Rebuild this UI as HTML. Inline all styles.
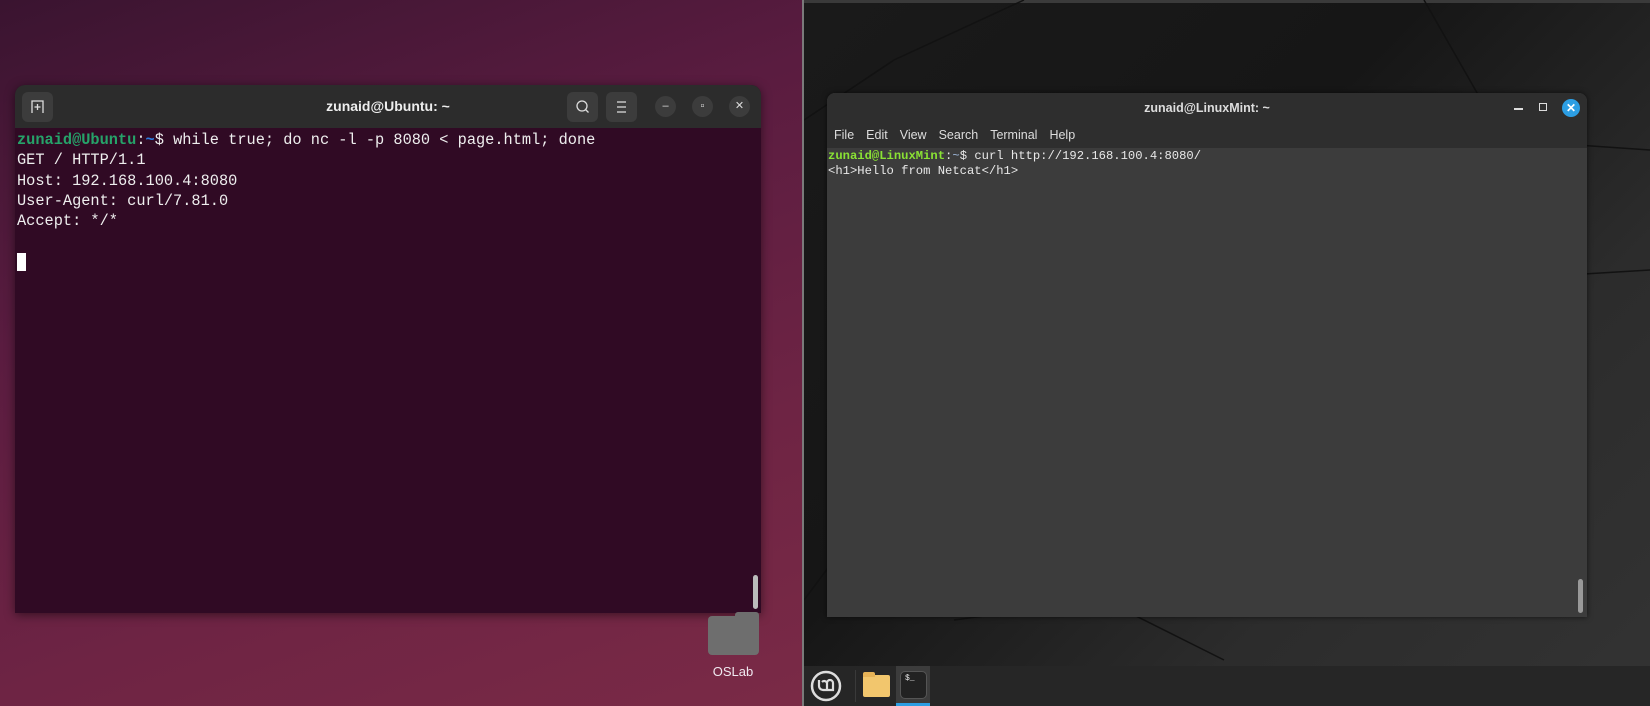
<!DOCTYPE html>
<html><head><meta charset="utf-8"><style>
*{margin:0;padding:0;box-sizing:border-box}
body{width:1650px;height:706px;overflow:hidden;position:relative;font-family:"Liberation Sans",sans-serif;background:#000}
.left{position:absolute;left:0;top:0;width:803px;height:706px;background:linear-gradient(160deg,#3a1430 0%,#5a1c40 35%,#6e2444 70%,#7a2a46 100%)}
.right{position:absolute;left:804px;top:0;width:846px;height:706px;background:linear-gradient(135deg,#1a1a1a 0%,#161616 40%,#2c2c2c 70%,#333 100%)}
.right:before{content:"";position:absolute;left:0;top:0;width:846px;height:3px;background:#3a3a3a}
.div{position:absolute;left:802px;top:0;width:2px;height:706px;background:#7a7a7a}
.uw{position:absolute;left:15px;top:85px;width:746px;height:528px;background:#300a24;border-radius:10px 10px 0 0;overflow:hidden;box-shadow:0 2px 10px rgba(0,0,0,.5)}
.ut{height:43px;background:#2c2c2c;position:relative;color:#eee;font-weight:bold;font-size:14px;text-align:center;line-height:43px}
.btn{position:absolute;top:7px;width:31px;height:30px;background:#3c3c3c;border-radius:6px}
.cir{position:absolute;top:11px;width:21px;height:21px;border-radius:50%;background:#3c3c3c;color:#ddd;font-size:11px;line-height:21px;text-align:center;font-weight:normal}
.mono{font-family:"Liberation Mono","DejaVu Sans Mono",monospace}
.ub{padding:2px 0 0 2px;font-size:15.3px;line-height:20.3px;color:#eee;white-space:pre}
.mw{position:absolute;left:827px;top:93px;width:760px;height:524px;background:#3c3c3c;border-radius:8px 8px 0 0;overflow:hidden;box-shadow:0 0 6px rgba(0,0,0,.6)}
.mt{height:30px;background:#2e2e2e;color:#ddd;font-size:12.5px;font-weight:bold;text-align:center;line-height:30px;position:relative}
.mm{height:25px;background:#2e2e2e;color:#ddd;font-size:12.5px;line-height:24px;padding-left:7px;word-spacing:0}
.mm span{margin-right:12px}
.mb{padding:1px 0 0 1px;font-size:12.2px;line-height:15px;color:#e8e8e8;white-space:pre}
.task{position:absolute;left:804px;top:666px;width:846px;height:40px;background:#262626}
</style></head><body>
<div class="left"></div>
<div class="right">
<svg width="846" height="706" style="position:absolute;left:0;top:0" stroke="#121212" stroke-width="1.5" fill="none"><path d="M0 120 L90 60 L220 0"/><path d="M180 420 L60 520 L0 600"/><path d="M150 620 L300 600 L420 660"/><path d="M620 0 L700 140 L846 150"/><path d="M680 280 L846 270"/></svg>
</div>
<div class="div"></div>

<div class="uw">
 <div class="ut">zunaid@Ubuntu: ~
  <div class="btn" style="left:7px"><svg width="31" height="30"><path d="M10 21V9h11v12M15.5 12v6M12.5 15h6" stroke="#ddd" stroke-width="1.3" fill="none"/></svg></div>
  <div class="btn" style="left:552px"><svg width="31" height="30"><circle cx="15" cy="14" r="5" stroke="#ddd" stroke-width="1.3" fill="none"/><path d="M18.5 17.5l3 3" stroke="#ddd" stroke-width="1.3"/></svg></div>
  <div class="btn" style="left:591px"><svg width="31" height="30"><path d="M11 10h9M11 15h9M11 20h9" stroke="#ddd" stroke-width="1.3"/></svg></div>
  <div class="cir" style="left:640px">–</div>
  <div class="cir" style="left:677px">▫</div>
  <div class="cir" style="left:714px">✕</div>
 </div>
 <div class="ub mono"><span style="color:#26a269;font-weight:bold">zunaid@Ubuntu</span>:<span style="color:#2a7bde;font-weight:bold">~</span>$ while true; do nc -l -p 8080 &lt; page.html; done
GET / HTTP/1.1
Host: 192.168.100.4:8080
User-Agent: curl/7.81.0
Accept: */*

<span style="background:#fff">&nbsp;</span></div>
 <div style="position:absolute;left:738px;top:490px;width:5px;height:34px;background:#bbb;border-radius:3px"></div>
</div>

<div style="position:absolute;left:708px;top:616px;width:51px;height:39px;background:#6e6e6e;border-radius:4px"></div>
<div style="position:absolute;left:735px;top:612px;width:24px;height:8px;background:#6e6e6e;border-radius:3px 3px 0 0"></div>
<div style="position:absolute;left:690px;top:664px;width:86px;text-align:center;color:#f0e8f0;font-size:13px">OSLab</div>

<div class="mw">
 <div class="mt">zunaid@LinuxMint: ~
  <div style="position:absolute;left:687px;top:15px;width:9px;height:1.5px;background:#ddd"></div>
  <div style="position:absolute;left:712px;top:10px;width:8px;height:8px;border:1.5px solid #ddd"></div>
  <div style="position:absolute;left:735px;top:6px;width:18px;height:18px;border-radius:50%;background:#2c9ee3;color:#fff;font-size:12px;line-height:18px">✕</div>
 </div>
 <div class="mm"><span>File</span><span>Edit</span><span>View</span><span>Search</span><span>Terminal</span><span>Help</span></div>
 <div class="mb mono"><span style="color:#8ae234;font-weight:bold">zunaid@LinuxMint</span>:<span style="color:#9db6d8">~</span>$ curl http://192.168.100.4:8080/
&lt;h1&gt;Hello from Netcat&lt;/h1&gt;</div>
 <div style="position:absolute;left:751px;top:486px;width:5px;height:34px;background:#999;border-radius:3px"></div>
</div>

<div class="task">
 <svg width="40" height="40" style="position:absolute;left:3px;top:0"><circle cx="19" cy="20" r="14" stroke="#ddd" stroke-width="2.5" fill="none"/><path d="M12 14v6a4 4 0 0 0 4 4h10v-7a3 3 0 0 0-6 0v6M20 17a3 3 0 0 0-5-1" stroke="#ddd" stroke-width="2.2" fill="none"/></svg>
 <div style="position:absolute;left:51px;top:4px;width:1px;height:32px;background:#3a3a3a"></div>
 <div style="position:absolute;left:59px;top:9px;width:27px;height:22px;background:#f2c66d;border-radius:2px"></div>
 <div style="position:absolute;left:59px;top:6px;width:12px;height:5px;background:#e7b357;border-radius:2px 2px 0 0"></div>
 <div style="position:absolute;left:92px;top:0;width:34px;height:40px;background:#3c3c3c;border-bottom:3px solid #2c9ee3"></div>
 <div style="position:absolute;left:96px;top:5px;width:27px;height:28px;background:#222;border:1.5px solid #555;border-radius:5px;color:#eee;font-size:8px;padding:2px 0 0 4px" class="mono">$_</div>
</div>
</body></html>
